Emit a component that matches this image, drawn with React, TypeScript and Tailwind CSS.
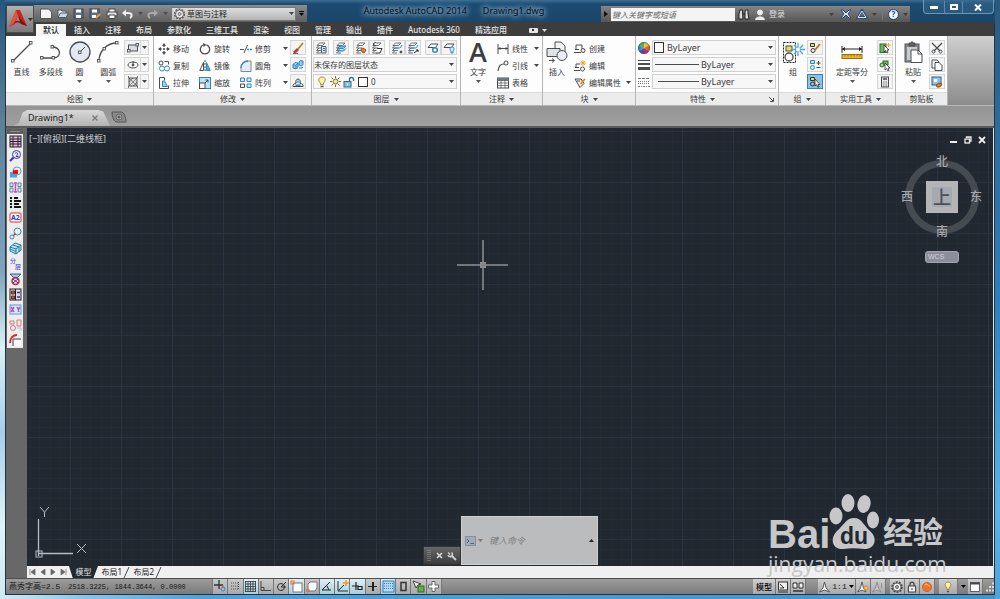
import type React from "react"

type Children = { children?: React.ReactNode }

interface GlyphProps extends Children {
  w?: number
  h?: number
  color?: string
}

const BLUE = "#2f86c1"

const Glyph = ({ w = 12, h = 12, color = "#4a4d50", children }: GlyphProps) => (
  <svg width={w} height={h} viewBox={`0 0 ${w} ${h}`} fill="none" stroke={color} className="block shrink-0" aria-hidden="true">
    {children}
  </svg>
)

const Caret = ({ className = "text-[#444]" }: { className?: string }) => (
  <svg width="5" height="3" viewBox="0 0 5 3" fill="currentColor" className={`block shrink-0 ${className}`} aria-hidden="true">
    <path d="M0 0h5L2.5 3z" />
  </svg>
)

/* ---------- ribbon building blocks ---------- */

const Panel = ({ title, width, caret = true, launcher = false, children }: Children & { title: string; width: string; caret?: boolean; launcher?: boolean }) => (
  <section className={`flex shrink-0 flex-col border-r border-[#b4b4b4] bg-[#fdfdfd] ${width}`}>
    <div className="flex h-[56px] pt-1">{children}</div>
    <div className="flex h-[13px] items-center border-t border-[#dcdcdc] bg-[#ececec]">
      <button className="flex flex-1 items-center justify-center gap-1 leading-3">
        {title}
        {caret && <Caret />}
      </button>
      {launcher && (
        <button aria-label="特性设置" className="pr-1">
          <Glyph w={5} h={5}>
            <path d="M0 0l4 4M4.500 1v3.500H1" />
          </Glyph>
        </button>
      )}
    </div>
  </section>
)

const BigButton = ({ label, width, caret = false, icon }: { label: string; width: string; caret?: boolean; icon: React.ReactNode }) => (
  <button className={`flex shrink-0 flex-col items-center ${width}`}>
    <span className="flex h-6 items-center">{icon}</span>
    <span className="h-4 leading-4 whitespace-nowrap">{label}</span>
    {caret && <Caret className="text-[#555]" />}
  </button>
)

const Command = ({ label, width = "w-[41px]", icon }: { label: string; width?: string; icon: React.ReactNode }) => (
  <button className={`flex h-[17px] shrink-0 items-center gap-[3px] whitespace-nowrap ${width}`}>
    {icon}
    {label}
  </button>
)

const CaretButton = ({ label }: { label: string }) => (
  <button aria-label={label} className="flex h-[17px] w-2 shrink-0 items-center justify-center">
    <Caret />
  </button>
)

const ToolButton = ({ label, active = false, children }: Children & { label: string; active?: boolean }) => (
  <button
    aria-label={label}
    className={`flex h-[15px] w-4 shrink-0 items-center justify-center border ${active ? "border-[#3c7fb8] bg-[#8cc0ee]" : "border-[#d5d5d5] bg-[#f4f4f4]"}`}
  >
    {children}
  </button>
)

const SplitTool = ({ label, children }: Children & { label: string }) => (
  <div className="flex h-[15px] w-[25px] border border-[#d5d5d5] bg-[#f4f4f4]">
    <button aria-label={label} className="flex w-4 items-center justify-center border-r border-[#d5d5d5]">
      {children}
    </button>
    <button aria-label={`${label}选项`} className="flex flex-1 items-center justify-center">
      <Caret />
    </button>
  </div>
)

const Combo = ({ label, value, children }: Children & { label: string; value: string }) => (
  <label className="flex h-[15px] flex-1 items-center gap-[2px] border border-[#d0d0d0] bg-[#f7f7f7] pr-[2px]">
    {children}
    <select aria-label={label} className="min-w-0 flex-1 appearance-none bg-transparent leading-3 outline-none">
      <option>{value}</option>
    </select>
    <Caret />
  </label>
)

/* ---------- icons ---------- */

const Node = ({ x, y }: { x: number; y: number }) => <rect x={x} y={y} width="2.500" height="2.500" fill="#fff" strokeWidth=".9" />

// stack of sheets seen at an angle, shared by all layer tools
const LayerIcon = ({ children }: Children) => (
  <Glyph>
    <g strokeWidth=".8">
      <path d="M2 3.500L4.500 1H10L7.500 3.500z" fill="#fff" />
      <path d="M4 3.500L1.500 6H7M4 6L1.500 8.500H6M4 8.500L1.500 11H6" />
    </g>
    {children}
  </Glyph>
)

const layerTools = {
  properties: <path d="M6.500 4.500h4.500v6.500H6.500zM8 6.500h2M8 8.500h2" fill="#cfe4f5" stroke="#41607a" />,
  current: <path d="M2.500 6.500L5 4h6L8.500 6.500zM2.500 9L5 6.500M3 9h5.500L11 6.500" fill="#7dbbe6" stroke={BLUE} />,
  match: <path d="M6 7l2-1 3 2-2 3-2-1z" fill="#e08a34" stroke="#9b4d16" />,
  previous: <path d="M5 0L2 2l3 2M6 6.500h5L9 11H5" fill="#fff" stroke="#333" />,
  isolate: (
    <>
      <path d="M4 6h5l2-3M4 8.500h3" stroke={BLUE} />
      <circle cx="10" cy="10" r="1" fill="#333" />
    </>
  ),
  unisolate: (
    <>
      <path d="M4 6h5l2-3M4 8.500h3" stroke={BLUE} />
      <path d="M7 11l4-3M9 8h2v2" stroke="#222" />
    </>
  ),
}

const DrawPanel = () => (
  <Panel title="绘图" width="w-[148px]">
    <div className="flex flex-1 justify-between pr-1 pl-[2px]">
      <BigButton
        label="直线"
        width="w-[27px]"
        icon={
          <Glyph w={22} h={22}>
            <path d="M2 20L20 2" strokeWidth="1.300" />
            <Node x={0.5} y={18.5} />
            <Node x={18.5} y={0.5} />
          </Glyph>
        }
      />
      <BigButton
        label="多段线"
        width="w-[28px]"
        icon={
          <Glyph w={22} h={18}>
            <path d="M2 15h12c8-1 7-11-2-11" strokeWidth="1.300" />
            <Node x={0.5} y={13.5} />
            <Node x={12} y={13.5} />
            <Node x={11} y={2.5} />
          </Glyph>
        }
      />
      <BigButton
        label="圆"
        caret
        width="w-[26px]"
        icon={
          <Glyph w={22} h={22}>
            <circle cx="11" cy="11" r="10" fill="#e4e9f1" strokeWidth="1.300" />
            <path d="M11 11l5-5" />
            <Node x={9.5} y={10} />
          </Glyph>
        }
      />
      <BigButton
        label="圆弧"
        caret
        width="w-[28px]"
        icon={
          <Glyph w={22} h={22}>
            <path d="M2 20C2 10 10 2 20 2" strokeWidth="1.300" />
            <Node x={0.5} y={18.5} />
            <Node x={6} y={6.5} />
            <Node x={18.5} y={0.5} />
          </Glyph>
        }
      />
      <div className="flex flex-col gap-[2px]">
        <SplitTool label="矩形">
          <Glyph w={12} h={10}>
            <rect x="1.500" y="2" width="9" height="6" fill="#d9dde2" />
            <Node x={0.5} y={6.5} />
            <Node x={9} y={0.5} />
          </Glyph>
        </SplitTool>
        <SplitTool label="椭圆">
          <Glyph w={12} h={10}>
            <ellipse cx="6" cy="5" rx="5" ry="3" fill="#fff" />
            <circle cx="6" cy="5" r="1" fill="#444" />
            <path d="M6 1v3" />
          </Glyph>
        </SplitTool>
        <SplitTool label="图案填充">
          <Glyph w={12} h={12}>
            <rect x="2" y="2" width="8" height="8" fill="#ddd" />
            <path d="M2 6l4-4M2 10l8-8M6 10l4-4M2 2l8 8" strokeWidth=".6" />
            <path d="M1 1h1M10 1h1M1 11h1M10 11h1" strokeWidth="1.500" />
          </Glyph>
        </SplitTool>
      </div>
    </div>
  </Panel>
)

const ModifyPanel = () => (
  <Panel title="修改" width="w-[158px]">
    <div className="flex flex-1 pl-1">
      <div className="flex flex-col">
        <Command
          label="移动"
          icon={
            <Glyph>
              <path d="M6 1v10M1 6h10" strokeDasharray="3 1 2 1" strokeWidth="1.200" />
              <path d="M4 3l2-3 2 3zM4 9l2 3 2-3zM3 4L0 6l3 2zM9 4l3 2-3 2z" fill="#4a4d50" stroke="none" />
            </Glyph>
          }
        />
        <Command
          label="复制"
          icon={
            <Glyph>
              <circle cx="3" cy="3" r="2" />
              <path d="M6.500 1.500h4v3" />
              <circle cx="4" cy="8.500" r="2.500" fill="#fff" stroke={BLUE} />
              <circle cx="9" cy="8.500" r="2.500" fill="#fff" stroke={BLUE} />
            </Glyph>
          }
        />
        <Command
          label="拉伸"
          icon={
            <Glyph>
              <path d="M1.500 .5v11h9v-3M1.500 .5h5v3" />
              <path d="M4.500 9.500V4h2l3 5.500z" fill="#9fd0f2" stroke={BLUE} />
            </Glyph>
          }
        />
      </div>
      <div className="flex flex-col">
        <Command
          label="旋转"
          icon={
            <Glyph>
              <path d="M7.500 1.800A4.700 4.700 0 1 1 4 2" strokeWidth="1.300" />
              <path d="M4 0l3.500 1.800L4.500 4z" fill="#4a4d50" stroke="none" />
            </Glyph>
          }
        />
        <Command
          label="镜像"
          icon={
            <Glyph>
              <path d="M4.500 2.500v8H.8z" />
              <path d="M7.500 2.500v8h3.700z" fill="#5aaae0" stroke={BLUE} />
              <path d="M6 0v12" strokeDasharray="2 1" />
            </Glyph>
          }
        />
        <Command
          label="缩放"
          icon={
            <Glyph>
              <rect x=".5" y=".5" width="11" height="11" fill="#bfe0f5" stroke={BLUE} />
              <rect x=".5" y="6" width="5.500" height="5.500" fill="#fff" />
              <path d="M6 6l3-3M6.500 3H9v2.500" />
            </Glyph>
          }
        />
      </div>
      <div className="flex flex-col">
        <Command
          label="修剪"
          icon={
            <Glyph>
              <path d="M0 6.500h4M4 10l3.500-8" />
              <path d="M7 6.500h2M10 6.500h2" stroke={BLUE} strokeWidth="1.300" />
            </Glyph>
          }
        />
        <Command
          label="圆角"
          icon={
            <Glyph>
              <path d="M1 11.500V8c0-4 3-7 7-7h3v10.500z" fill="#e4eef5" stroke="#7c8790" />
              <path d="M1 8c0-4 3-7 7-7" stroke={BLUE} strokeWidth="1.300" />
            </Glyph>
          }
        />
        <Command
          label="阵列"
          icon={
            <Glyph>
              <path d="M.5 1h4v3.500h-4zM7 1h4v3.500H7zM7 7h4v3.500H7z" fill="#d7ebf8" stroke={BLUE} />
              <path d="M.5 7h4v3.500h-4z" />
            </Glyph>
          }
        />
      </div>
      <div className="flex flex-col">
        <CaretButton label="修剪选项" />
        <CaretButton label="圆角选项" />
        <CaretButton label="阵列选项" />
      </div>
      <div className="ml-px flex flex-col gap-[2px]">
        <ToolButton label="删除">
          <Glyph>
            <path d="M11 1L6 7" stroke="#c07a28" strokeWidth="1.800" />
            <path d="M5 6l2 2-3 3H2l-1-1z" fill="#b8402a" stroke="none" />
            <path d="M1 11.500h5" strokeWidth=".8" />
          </Glyph>
        </ToolButton>
        <ToolButton label="分解">
          <Glyph>
            <path d="M1 5.500l2-2 3 .5v4.500L4 10 1 9zM1 5.500l3 .8L6 4M4 6.300V10M7 3l1.500-1.500L11 2v3.500L9.500 7 7 6zM7 9h3l1-1" fill="#8cc6ee" stroke={BLUE} />
          </Glyph>
        </ToolButton>
        <ToolButton label="偏移">
          <Glyph>
            <path d="M1 10.500h10c.5-2-1-3-3-3 1.500-6-5.500-6-4 0-2 0-3.500 1-3 3z" stroke="#444" />
            <path d="M3.500 9.200h5" stroke={BLUE} strokeWidth="1.500" />
            <path d="M5.200 7c-.8-3 2.400-3 1.600 0" stroke={BLUE} />
          </Glyph>
        </ToolButton>
      </div>
    </div>
  </Panel>
)

const LayerPanel = () => (
  <Panel title="图层" width="w-[149px]">
    <div className="flex flex-1 flex-col gap-[2px] pr-[3px] pl-px">
      <div className="flex justify-between">
        <ToolButton label="图层特性">
          <LayerIcon>{layerTools.properties}</LayerIcon>
        </ToolButton>
        <ToolButton label="置为当前">
          <LayerIcon>{layerTools.current}</LayerIcon>
        </ToolButton>
        <div className="flex">
          <ToolButton label="匹配">
            <LayerIcon>{layerTools.match}</LayerIcon>
          </ToolButton>
          <ToolButton label="上一个">
            <LayerIcon>{layerTools.previous}</LayerIcon>
          </ToolButton>
        </div>
        <div className="flex">
          <ToolButton label="隔离">
            <LayerIcon>{layerTools.isolate}</LayerIcon>
          </ToolButton>
          <ToolButton label="取消隔离">
            <LayerIcon>{layerTools.unisolate}</LayerIcon>
          </ToolButton>
        </div>
        <div className="flex">
          <ToolButton label="冻结">
            <Glyph>
              <path d="M1 5.500L4 2h7L8.500 5.500z" fill="#fff" />
              <circle cx="8" cy="8" r="2.300" fill="#fff" stroke={BLUE} strokeWidth="1.500" />
            </Glyph>
          </ToolButton>
          <ToolButton label="关闭">
            <Glyph>
              <path d="M1 5.500L4 2h7L8.500 5.500z" fill="#fff" />
              <path d="M9 5c-3 0-2 3-1 4v2h2V9c1-1 2-4-1-4z" fill="#d5e8f7" stroke={BLUE} />
            </Glyph>
          </ToolButton>
        </div>
      </div>
      <div className="flex">
        <Combo label="图层状态" value="未保存的图层状态" />
      </div>
      <div className="flex">
        <Combo label="图层" value="0">
          <Glyph w={14} h={12}>
            <path d="M8 1C4 1 4 5 6.500 7v1.500h3V7C12 5 12 1 8 1z" fill="#fff1a8" stroke="#a08a45" />
            <path d="M6.500 10.500h3" stroke="#555" strokeWidth="1.500" />
          </Glyph>
          <Glyph w={11} h={11}>
            <circle cx="5.500" cy="5.500" r="2.500" fill="#f8e58e" stroke="#7c6c38" />
            <path d="M5.500 0v2M5.500 9v2M0 5.500h2M9 5.500h2M1.500 1.500l1.500 1.500M8 8l1.500 1.500M9.500 1.500L8 3M3 8L1.500 9.500" stroke="#7c6c38" />
          </Glyph>
          <Glyph w={12} h={12}>
            <rect x="1" y="5.500" width="7" height="5.500" fill="#88bfe0" stroke="#2f6b8f" />
            <path d="M6.500 5V3c0-2 4-2 4 0v2" stroke="#2f6b8f" strokeWidth="1.300" />
            <path d="M4.500 7.500v2" stroke="#fff" />
          </Glyph>
          <Glyph w={12} h={12}>
            <rect x="1.500" y="1.500" width="9" height="9" fill="#fff" stroke="#333" />
          </Glyph>
        </Combo>
      </div>
    </div>
  </Panel>
)

const AnnotatePanel = () => (
  <Panel title="注释" width="w-[82px]">
    <div className="flex flex-1 pl-1">
      <BigButton
        label="文字"
        caret
        width="w-[26px]"
        icon={<span className="font-['Open_Sans',sans-serif] text-[27px] leading-6 font-semibold text-[#3b3d40]">A</span>}
      />
      <div className="ml-[6px] flex flex-col">
        <Command
          label="线性"
          width="w-[35px]"
          icon={
            <Glyph>
              <path d="M1 1v10M11 1v10M1 5.500h10" />
              <path d="M1 5.500l2.500-1.500v3zM11 5.500L8.500 4v3z" fill="#444" stroke="none" />
            </Glyph>
          }
        />
        <Command
          label="引线"
          width="w-[35px]"
          icon={
            <Glyph>
              <path d="M1 11c1-5 2-7 6-7" strokeWidth="1.200" />
              <circle cx="9" cy="3" r="2" />
            </Glyph>
          }
        />
        <Command
          label="表格"
          width="w-[35px]"
          icon={
            <Glyph>
              <rect x=".5" y="1" width="11" height="10" fill="#fff" />
              <path d="M.5 2.500h11" strokeWidth="3" stroke="#6d7a86" />
              <path d="M.5 6h11M.5 8.500h11M4 3v8M8 3v8" strokeWidth=".7" />
            </Glyph>
          }
        />
      </div>
      <div className="flex flex-col">
        <CaretButton label="线性选项" />
        <CaretButton label="引线选项" />
      </div>
    </div>
  </Panel>
)

const BlockPanel = () => (
  <Panel title="块" width="w-[93px]">
    <div className="flex flex-1 pl-px">
      <BigButton
        label="插入"
        width="w-[26px]"
        icon={
          <Glyph w={22} h={22}>
            <path d="M9 1h6l4 4v6H9z" fill="#f3f3f3" />
            <path d="M1 7.500h13v8H1z" fill="#dfe3e8" />
            <circle cx="16" cy="14.500" r="5" fill="#e9ecf0" />
            <path d="M3 19.500h5M6 17.500l2.500 2L6 21.500" />
          </Glyph>
        }
      />
      <div className="ml-1 flex flex-col">
        <Command
          label="创建"
          width="w-[50px]"
          icon={
            <Glyph>
              <path d="M2 6V2h6v4" />
              <circle cx="9" cy="7.500" r="2" fill="#eee" />
              <path d="M0 9.500h7M1 6.500h4" />
            </Glyph>
          }
        />
        <Command
          label="编辑"
          width="w-[50px]"
          icon={
            <Glyph>
              <path d="M6 4H2v4M1 7.500h4M0 10.500h6" />
              <circle cx="8.500" cy="9" r="2" fill="#fff" />
              <path d="M9 0v6M6 3h6M7 1l4 4M11 1L7 5" stroke="#f0a020" strokeWidth=".9" />
            </Glyph>
          }
        />
        <Command
          label="编辑属性"
          width="w-[50px]"
          icon={
            <Glyph>
              <path d="M1 2l5 8.500 4-4L7 2z" fill="#f2efe6" />
              <path d="M11 2L6.500 7" stroke="#d9822b" strokeWidth="1.800" />
              <path d="M3 4h3" />
            </Glyph>
          }
        />
      </div>
      <div className="flex flex-col justify-end pb-px">
        <CaretButton label="编辑属性选项" />
      </div>
    </div>
  </Panel>
)

const PropertiesPanel = () => (
  <Panel title="特性" width="w-[143px]" launcher>
    <div className="flex flex-1 flex-col gap-[2px] px-[2px] text-[9px]">
      <div className="flex items-center gap-[2px]">
        <Glyph>
          <g stroke="none">
            <path d="M6 6V0a6 6 0 0 1 5.200 3z" fill="#f0c33c" />
            <path d="M6 6l5.200-3a6 6 0 0 1 0 6z" fill="#e0662c" />
            <path d="M6 6l5.200 3A6 6 0 0 1 6 12z" fill="#c12f5a" />
            <path d="M6 6v6A6 6 0 0 1 .8 9z" fill="#5a46b0" />
            <path d="M6 6L.8 9a6 6 0 0 1 0-6z" fill="#3a8ad0" />
            <path d="M6 6L.8 3A6 6 0 0 1 6 0z" fill="#58b04a" />
          </g>
          <circle cx="6" cy="6" r="5.500" strokeWidth=".7" />
        </Glyph>
        <Combo label="对象颜色" value="ByLayer">
          <Glyph w={12} h={13}>
            <rect x="1.500" y="1.500" width="9" height="10" fill="#fff" stroke="#333" />
          </Glyph>
        </Combo>
      </div>
      <div className="flex items-center gap-[2px]">
        <Glyph>
          <path d="M0 1.500h12" />
          <path d="M0 5h12" strokeWidth="2" />
          <path d="M0 9.500h12" strokeWidth="3" />
        </Glyph>
        <Combo label="线宽" value="ByLayer">
          <Glyph w={46} h={3}>
            <path d="M2 1.500h44" />
          </Glyph>
        </Combo>
      </div>
      <div className="flex items-center gap-[2px]">
        <Glyph color="#777">
          <path d="M0 2.500h12" strokeDasharray="3 1" />
          <path d="M0 5.500h12M0 7.500h12" strokeDasharray="1 1" />
          <path d="M0 10.500h12" strokeDasharray="2 1 1 1" />
        </Glyph>
        <Combo label="线型" value="ByLayer">
          <Glyph w={46} h={3}>
            <path d="M5 1.500h41" />
          </Glyph>
        </Combo>
      </div>
    </div>
  </Panel>
)

const GroupPanel = () => (
  <Panel title="组" width="w-[47px]">
    <div className="flex flex-1 justify-between px-[2px]">
      <BigButton
        label="组"
        width="w-6"
        icon={
          <Glyph w={23} h={24}>
            <rect x="1.500" y="2.500" width="12" height="20" stroke="#222" strokeDasharray="2 1" />
            <rect x="4" y="6" width="6" height="5" fill="#e7e04a" />
            <circle cx="7" cy="17" r="4" fill="#fff" strokeWidth="1.300" />
            <path d="M16 3v13M10 9.500h13M12 5l9 9M21 5l-9 9" stroke="#4aa6df" strokeWidth="1.300" />
            <circle cx="16" cy="9.500" r="2" fill="#fff" stroke="none" />
          </Glyph>
        }
      />
      <div className="flex flex-col gap-[2px]">
        <ToolButton label="解除编组">
          <Glyph>
            <path d="M1.500 1.500h4v3h-4z" fill="#e7e04a" stroke="#333" />
            <circle cx="4" cy="8.500" r="2" stroke="#333" />
            <path d="M11 2L6 8" stroke="#b9701f" strokeWidth="1.800" />
          </Glyph>
        </ToolButton>
        <ToolButton label="组编辑">
          <Glyph>
            <path d="M1.500 1.500h4v3h-4z" fill="#bddcf1" stroke={BLUE} />
            <circle cx="3.500" cy="8.500" r="2" stroke={BLUE} />
            <path d="M7.500 4h4M9.500 2v4M7.500 8.500h4" />
          </Glyph>
        </ToolButton>
        <ToolButton label="组选择" active>
          <Glyph>
            <path d="M1.500 1.500h4v3h-4z" fill="#e7e04a" stroke="#333" />
            <circle cx="3.500" cy="8" r="2" stroke="#333" />
            <path d="M6 3v7l1.500-1.500L9 11.500l1-.5-1-2.500h2z" fill="#fff2b8" stroke="#333" strokeWidth=".8" />
          </Glyph>
        </ToolButton>
      </div>
    </div>
  </Panel>
)

const UtilitiesPanel = () => (
  <Panel title="实用工具" width="w-[70px]">
    <div className="flex flex-1 justify-between pr-[2px] pl-2">
      <BigButton
        label="定距等分"
        caret
        width="w-9"
        icon={
          <Glyph w={22} h={16}>
            <path d="M1 2v7M21 2v7M1 5h20" stroke="#222" />
            <path d="M1 5l3-2v4zM21 5l-3-2v4z" fill="#222" stroke="none" />
            <rect x="1" y="10.500" width="20" height="4" fill="#efb62c" stroke="#9a6d10" />
            <path d="M4 11v1.500M7 11v1.500M10 11v1.500M13 11v1.500M16 11v1.500M19 11v1.500" stroke="#7d560a" strokeWidth=".7" />
          </Glyph>
        }
      />
      <div className="flex flex-col gap-[2px]">
        <ToolButton label="快速选择">
          <Glyph>
            <rect x="1" y="2" width="6" height="8.500" fill="#6db85a" stroke="#2c6e22" />
            <path d="M5 3v7l1.500-1.500L8 11l1-.5L8 8h2z" fill="#fff" stroke="#333" strokeWidth=".8" />
            <path d="M9.500 1v4M7.500 3h4" stroke="#f0a020" />
          </Glyph>
        </ToolButton>
        <ToolButton label="全部选择">
          <Glyph>
            <rect x="4" y="2" width="5" height="4" fill="#6db85a" stroke="#2c6e22" />
            <circle cx="3" cy="6" r="2" fill="#a9d69e" stroke="#2c6e22" />
            <path d="M6 4v7l1.500-1.500L9 12l1-.5L9 9h2z" fill="#fff" stroke="#333" strokeWidth=".8" />
          </Glyph>
        </ToolButton>
        <ToolButton label="快速计算器">
          <Glyph>
            <rect x="2.500" y="1" width="7" height="10" fill="#e8e8e8" />
            <path d="M4 3h4" strokeWidth="1.500" />
            <path d="M4 6h4M4 8h4M4 10h4" strokeDasharray="1 .5" strokeWidth=".7" />
          </Glyph>
        </ToolButton>
      </div>
    </div>
  </Panel>
)

const ClipboardPanel = () => (
  <Panel title="剪贴板" width="w-[52px]" caret={false}>
    <div className="flex flex-1 justify-between pr-[2px] pl-[5px]">
      <BigButton
        label="粘贴"
        caret
        width="w-6"
        icon={
          <Glyph w={19} h={23}>
            <rect x="1" y="3" width="14" height="18" fill="#85878a" stroke="#55585b" />
            <path d="M3 6h10v13H3z" fill="#c9cbce" stroke="none" />
            <path d="M5 5V2h2l1-1.500L9 2h2v3z" fill="#666" />
            <path d="M7 9h7l4 4v8.500H7z" fill="#fff" />
            <path d="M14 9v4h4" />
          </Glyph>
        }
      />
      <div className="flex flex-col gap-[2px]">
        <ToolButton label="剪切">
          <Glyph>
            <path d="M1 1l8 8M11 1L3 9" strokeWidth="1.300" />
            <circle cx="2.500" cy="9.500" r="1.500" />
            <circle cx="9.500" cy="9.500" r="1.500" />
          </Glyph>
        </ToolButton>
        <ToolButton label="复制剪裁">
          <Glyph>
            <path d="M1 1h5l2 2v6H1z" fill="#fff" />
            <path d="M4 3.500h4l3 3v5H4z" fill="#fff" />
          </Glyph>
        </ToolButton>
        <ToolButton label="特性匹配">
          <Glyph>
            <rect x="1" y="1" width="9" height="8" fill="#8fc3ea" stroke="#33628c" />
            <path d="M3 3h3v3H3z" fill="#fff" stroke="none" />
            <path d="M5 9l3-2 3 1-2 3H6z" fill="#d9822b" stroke="#8f4c12" />
          </Glyph>
        </ToolButton>
      </div>
    </div>
  </Panel>
)

/* ---------- title bar ---------- */

const TitleBar = () => (
  <div className="flex h-[22px]">
    <div className="mt-[5px] flex w-[273px] shrink-0 items-center bg-linear-to-b from-[#8d8d8d] to-[#5f5f5f] pl-[6px]">
      <div className="flex flex-1 items-center justify-between pr-[3px]">
        <button aria-label="新建">
          <Glyph w={12} h={11} color="#555">
            <path d="M.5 1h8l3 3v6.500H.5z" fill="#f5f5f5" />
          </Glyph>
        </button>
        <button aria-label="打开">
          <Glyph w={12} h={11} color="#4d5866">
            <path d="M1 9.500V2h3l1 1h4v2" fill="#eee" />
            <path d="M1 9.500L3.500 5h8L9 9.500z" fill="#c9dbea" />
          </Glyph>
        </button>
        <button aria-label="保存">
          <Glyph w={11} h={11} color="#3a4454">
            <rect x="1" y="1" width="9" height="9" fill="#5f6d82" />
            <path d="M3 1.500h5v3H3zM3 7h5v3H3z" fill="#fff" stroke="none" />
          </Glyph>
        </button>
        <button aria-label="另存为">
          <Glyph w={12} h={11} color="#3a4454">
            <rect x="1" y="1" width="9" height="9" fill="#5f6d82" />
            <path d="M3 1.500h5v3H3zM3 7h4v3H3z" fill="#fff" stroke="none" />
            <path d="M11 6l-4 4" stroke="#e8973a" strokeWidth="2" />
          </Glyph>
        </button>
        <button aria-label="打印">
          <Glyph w={12} h={11} color="#444">
            <path d="M3 4V1h6v3" fill="#fff" />
            <rect x="1" y="4" width="10" height="4" fill="#e6e6e6" />
            <path d="M3 7h6v3.500H3z" fill="#fff" />
          </Glyph>
        </button>
        <button aria-label="放弃">
          <Glyph w={11} h={10} color="#eee">
            <path d="M3 4h3c5 0 4 4 2 5" strokeWidth="2" />
            <path d="M0 4l4-3.500v7z" fill="#eee" stroke="none" />
          </Glyph>
        </button>
        <Caret className="text-[#4a4a4a]" />
        <button aria-label="重做">
          <Glyph w={11} h={10} color="#aaa">
            <path d="M8 4H5C0 4 1 8 3 9" strokeWidth="2" />
            <path d="M11 4L7 .5v7z" fill="#aaa" stroke="none" />
          </Glyph>
        </button>
        <Caret className="text-[#4a4a4a]" />
      </div>
      <label className="flex h-[14px] w-[125px] items-center gap-px border border-[#777] bg-linear-to-b from-[#dedede] to-[#b5b5b5] px-px text-[#222]">
        <Glyph w={13} h={12} color="#555">
          <circle cx="6.500" cy="6" r="4.800" strokeDasharray="1.800 1.200" strokeWidth="1.500" />
          <circle cx="6.500" cy="6" r="4" fill="#eee" strokeWidth=".8" />
          <circle cx="6.500" cy="6" r="1.500" fill="#ccc" strokeWidth=".8" />
        </Glyph>
        <select aria-label="工作空间" className="min-w-0 flex-1 appearance-none bg-transparent leading-3 outline-none">
          <option>草图与注释</option>
        </select>
        <Caret />
      </label>
      <button aria-label="自定义快速访问工具栏" className="flex w-[11px] flex-col items-center gap-px">
        <span className="h-px w-[5px] bg-black" />
        <Caret className="text-black" />
      </button>
    </div>

    <div className="flex min-w-0 flex-1 items-center justify-center gap-4 text-[9px] whitespace-nowrap text-[#050b12] [text-shadow:0_0_4px_#a9c6de,0_0_6px_#8fb4d4,0_0_9px_#8fb4d4]">
      <span>Autodesk AutoCAD 2014</span>
      <span>Drawing1.dwg</span>
    </div>

    <div className="mt-[6px] flex w-[309px] shrink-0 items-center bg-linear-to-b from-[#858585] to-[#565656] text-[#ddd]">
      <button aria-label="展开搜索" className="flex w-[10px] justify-center">
        <Glyph w={4} h={6}>
          <path d="M0 0l4 3-4 3z" fill="#111" stroke="none" />
        </Glyph>
      </button>
      <input aria-label="搜索" placeholder="键入关键字或短语" className="h-[13px] w-[124px] bg-[#f4f4f4] px-px italic outline-none placeholder:text-[#666]" />
      <button aria-label="查找" className="ml-[3px]">
        <Glyph w={12} h={11} color="#222">
          <path d="M2 1h2.500v2L5 10H1V5zM7.500 1H10v4l1 5H7V3z" fill="#ddd" />
          <path d="M5 5h2" />
        </Glyph>
      </button>
      <button className="ml-[5px] flex items-center gap-[4px]">
        <Glyph w={10} h={11} color="#eee">
          <circle cx="5" cy="3.500" r="2.500" fill="#eee" />
          <path d="M.5 10.500C1 7 9 7 9.500 10.500z" fill="#eee" />
        </Glyph>
        登录
      </button>
      <div className="flex flex-1 items-center justify-end gap-1 pr-[2px]">
        <Caret className="text-[#3f3f3f]" />
        <button aria-label="Exchange" className="ml-[2px]">
          <Glyph w={12} h={10} color="#24427f">
            <path d="M1 1h2l3 3 3-3h2L8 5l3 4H9L6 6 3 9H1l3-4z" fill="#dfe8f5" />
          </Glyph>
        </button>
        <button aria-label="Autodesk 360" className="flex items-center gap-1">
          <Glyph w={12} h={10} color="#dfe3ee">
            <path d="M6 1.500L2 8.500h8z" fill="none" stroke="#24427f" strokeWidth="2.500" />
            <path d="M6 2L2 8.500h8z" />
          </Glyph>
          <Caret className="text-[#3f3f3f]" />
        </button>
        <span className="mx-px h-3 w-px bg-[#777]" />
        <button aria-label="帮助" className="flex items-center gap-1">
          <span className="flex size-[11px] items-center justify-center rounded-full border border-[#1f3c78] bg-[#f3f6fb] leading-none font-bold text-[#1d4aa3]">?</span>
          <Caret className="text-[#3f3f3f]" />
        </button>
      </div>
    </div>

    <div className="ml-[13px] flex h-[14px] w-[71px] shrink-0 rounded-b border border-t-0 border-[#6c96b4] bg-[#3a6a8f]/50 pt-px">
      <button aria-label="最小化" className="flex w-5 items-center justify-center">
        <span className="h-[3px] w-2 bg-white" />
      </button>
      <button aria-label="最大化" className="flex w-[19px] items-center justify-center border-x border-[#5e89a8]">
        <span className="h-[6px] w-2 border-2 border-white" />
      </button>
      <button aria-label="关闭" className="flex flex-1 items-center justify-center">
        <Glyph w={8} h={7} color="#fff">
          <path d="M1 .5l6 6M7 .5l-6 6" strokeWidth="2" />
        </Glyph>
      </button>
    </div>
  </div>
)

const tabs = ["默认", "插入", "注释", "布局", "参数化", "三维工具", "渲染", "视图", "管理", "输出", "插件", "Autodesk 360", "精选应用"]

const Header = () => (
  <header className="flex">
    <div className="mt-[5px] w-7 shrink-0 bg-[#3d3d3d] pb-[3px]">
      <button aria-label="应用程序菜单" className="flex h-7 w-7 items-center gap-px border border-[#4b4b4b] bg-linear-to-b from-[#b0b0b0] to-[#7a7a7a] pl-[2px]">
        <Glyph w={18} h={20}>
          <g stroke="none">
            <path d="M7 1h4l7 16-6-2-3-8-3 8-6 3z" fill="#c3261b" />
            <path d="M7 1l2 6-4 7-5 4z" fill="#e2553f" />
            <path d="M9 7l9 10-6-2z" fill="#7d120d" />
            <path d="M5 14c3-3 5-3 8 1l-4-1.500z" fill="#8e1811" />
          </g>
        </Glyph>
        <Caret className="text-[#333]" />
      </button>
    </div>
    <div className="min-w-0 flex-1">
      <TitleBar />
      <nav className="flex h-[14px] gap-px bg-[#3d3d3d] pl-[2px] font-medium whitespace-nowrap text-[#e6e6e6]">
        {tabs.map((tab, i) => (
          <button key={tab} className={i === 0 ? "mt-[2px] bg-[#f6f6f6] px-[7px] leading-3 text-[#222]" : "px-[7px] pt-[2px] leading-3"}>
            {tab}
          </button>
        ))}
        <button aria-label="最小化功能区" className="ml-[14px] flex items-center gap-1 pt-[2px]">
          <span className="flex h-[5px] w-[9px] items-center justify-center rounded-[1px] bg-[#e6e6e6]">
            <span className="size-[2px] bg-[#333]" />
          </span>
          <Caret className="text-[#ddd]" />
        </button>
      </nav>
    </div>
  </header>
)

const DocumentTabs = () => (
  <div className="flex h-[21px] items-end border-t border-[#b5b5b5] bg-linear-to-b from-[#949494] to-[#a0a0a0] pl-2">
    <div className="flex h-4 w-[96px] items-center justify-between bg-linear-to-b from-[#d8d8d8] to-[#b4b4b4] pr-[12px] pl-[14px] text-[9px] text-[#222] [clip-path:polygon(0_100%,5%_80%,9%_15%,14%_0,88%_0,93%_10%,100%_100%)]">
      <button className="leading-4">Drawing1*</button>
      <button aria-label="关闭图形">
        <Glyph w={6} h={6} color="#777">
          <path d="M.5.5l5 5M5.500.5l-5 5" strokeWidth="1.200" />
        </Glyph>
      </button>
    </div>
    <button aria-label="新图形" className="mb-[3px] ml-px">
      <Glyph w={16} h={12} color="#555">
        <path d="M1 1h9c3 0 5 5 5 10H6C3 11 1 6 1 1z" fill="#8a8a8a" />
        <circle cx="8" cy="6" r="3" fill="#aaa" stroke="#666" />
        <path d="M8 4.500v3M6.500 6h3" stroke="#444" />
      </Glyph>
    </button>
  </div>
)

/* ---------- side tool strip ---------- */

const PINK = "#e23bd0"
const NAVY = "#3333c0"

const sideTools = [
  { label: "网格", art: <><rect x="1" y="1" width="11" height="11" fill="#e7b9e4" stroke="#222" /><path d="M1 4h11M1 6.500h11M1 9h11M4 1v11M9 1v11" stroke="#222" /></> },
  { label: "缩放视图", art: <><circle cx="7.500" cy="4.500" r="4" stroke={NAVY} /><path d="M4.500 7.500L1 11" stroke={NAVY} strokeWidth="2" /><path d="M6 3.500c2-2 4 0 1 3h2.500" stroke={NAVY} /></> },
  { label: "布尔", art: <><circle cx="8" cy="5" r="4" stroke="#7a99ac" /><path d="M1 6h7v5.500H1z" fill="#4ba1dc" stroke="none" /><path d="M4 4h5v4H4z" fill="#e81515" stroke="none" /></> },
  { label: "对称", art: <><path d="M1 2h3v3.500H1zM1 7h3v4H1zM9 2h3v3.500H9zM9 7h3v4H9z" stroke="#4a8a9c" /><path d="M5 2h3M6.500 2v9M5 11h3" stroke={PINK} strokeWidth="1.500" /></> },
  { label: "列表", art: <path d="M1 2h2M1 5h2M1 8h2M1 11h2M5 2h4M5 5h7M5 8h5M5 11h7" stroke="#111" strokeWidth="2" /> },
  { label: "图幅", art: <><rect x="1" y="2" width="11" height="9" rx="1" fill="#fff" stroke="#e22a2a" /><text x="2" y="9" fontSize="7" fontWeight="700" fill={NAVY} stroke="none">A2</text></> },
  { label: "连杆", art: <><circle cx="8.500" cy="4.500" r="3.500" fill="#e2f3f8" stroke="#3a8aa8" /><circle cx="3" cy="10" r="2" stroke="#3a8aa8" /><path d="M4.500 8.500l2-2" stroke="#e22a2a" strokeWidth="1.500" /></> },
  { label: "实体", art: <><path d="M1 5l5-4 6 2v5l-5 4-6-3z" fill="#c8e8f5" stroke="#1d7aa8" /><path d="M1 5l6 2 5-4M7 7v5M4 3l6 2v5M1 7l6 2.500" stroke="#1d7aa8" /></> },
  { label: "分层", art: <g fill={NAVY} stroke="none" fontSize="6"><text x="1" y="6">分</text><text x="6" y="12">层</text></g> },
  { label: "筛选", art: <><path d="M1 1h11l-4 4H5z" fill="#9cd0ea" stroke="#315f9c" /><circle cx="6.500" cy="8" r="3.500" stroke="#c22a2a" strokeWidth="1.500" /><path d="M4 6l5 4M9 6l-5 4" stroke={NAVY} /></> },
  { label: "图块库", art: <><rect x="1" y="1" width="11" height="11" fill="#dcdcdc" stroke="#222" /><path d="M2.500 3h3v3h-3zM2.500 8h3v3h-3z" fill="#b85a4a" stroke="#702a20" /><path d="M6.500 1v11" stroke="#222" /><path d="M8 4.500h3M8 9h3" stroke={NAVY} strokeWidth="1.500" /></> },
  { label: "坐标", art: <><rect x="1" y="2" width="11" height="9" fill="#c9f3fa" stroke="#43a3e0" /><path d="M2 4l3 5M5 4L2 9M8 4l1.500 2.500L11 4M9.500 6v3" stroke={PINK} strokeWidth="1.500" /></> },
  { label: "形状", art: <><path d="M1 2h4v3H1zM8 1h4v6H8z" stroke="#d87878" /><circle cx="4" cy="9" r="2.500" stroke="#d87878" /><path d="M8 9h4v3" stroke="#bbb" /></> },
  { label: "倒角", art: <><path d="M1 9c0-5 3-8 7-8" stroke="#d22" strokeWidth="1.800" /><path d="M4 12V5h8" stroke="#444" /><path d="M5 6h7v6H5z" fill="#fafafa" stroke="none" /></> },
]

const SideStrip = () => (
  <aside className="w-[21px] shrink-0 bg-[#686868] pl-px">
    <div className="mt-px w-4 bg-[#ededed]">
      <div className="flex h-[5px] items-center justify-center bg-[#5e5e5e]">
        <span className="h-px w-[10px] bg-[#8d8d8d]" />
      </div>
      <div className="flex h-[214px] flex-col justify-between py-px">
        {sideTools.map((tool) => (
          <button key={tool.label} aria-label={tool.label} className="flex justify-center">
            <Glyph w={13} h={13}>
              {tool.art}
            </Glyph>
          </button>
        ))}
      </div>
    </div>
  </aside>
)

/* ---------- drawing area ---------- */

const Grid = () => (
  <svg className="absolute inset-0 h-full w-full" aria-hidden="true">
    <defs>
      <pattern id="grid" x="43" y="3" width="51" height="51" patternUnits="userSpaceOnUse">
        <path d="M10.500 0v51M20.500 0v51M31.500 0v51M41.500 0v51M0 10.500h51M0 20.500h51M0 31.500h51M0 41.500h51" stroke="#242b35" fill="none" />
        <path d="M.5 0v51M0 .5h51" stroke="#2b3341" fill="none" />
      </pattern>
    </defs>
    <rect width="100%" height="100%" fill="#212830" />
    <rect width="100%" height="100%" fill="url(#grid)" />
  </svg>
)

const ViewCube = () => (
  <div className="absolute top-[27px] right-[9px] flex w-[84px] flex-col items-center">
    <div className="relative flex size-[84px] items-center justify-center text-[12px] leading-none font-medium text-[#a4a8ac]">
      <span className="absolute inset-[5px] rounded-full border-[7px] border-[#464b52]" />
      <button className="absolute top-px">北</button>
      <button className="absolute bottom-px">南</button>
      <button className="absolute left-px">西</button>
      <button className="absolute right-[2px]">东</button>
      <button className="relative flex size-8 items-center justify-center border-[6px] border-[#b4b5b7] bg-[#a5a9b1] text-[18px] leading-none text-[#4c5058]">上</button>
    </div>
    <button className="mt-3 flex h-3 w-[34px] items-center rounded-[3px] border border-[#a4a5b0] bg-[#8d8e9b] pl-[2px] font-['Liberation_Sans',sans-serif] text-[7px] text-[#d0d0da]">WCS</button>
  </div>
)

const Canvas = () => (
  <main className="relative min-h-[438px] flex-1 overflow-hidden text-[#c9ccd0]">
    <Grid />
    <div className="absolute top-[5px] left-[2px] flex text-[9px] leading-3">
      <button>[−]</button>
      <button>[俯视]</button>
      <button>[二维线框]</button>
    </div>
    <div className="absolute top-2 right-[7px] flex gap-[6px]">
      <button aria-label="最小化视口">
        <Glyph w={8} h={8} color="#eee">
          <path d="M0 6h7" strokeWidth="2" />
        </Glyph>
      </button>
      <button aria-label="还原视口">
        <Glyph w={8} h={8} color="#eee">
          <path d="M2.500 2V1H7v4H6" strokeWidth="1.300" />
          <rect x="1" y="3" width="4.500" height="4" strokeWidth="1.300" />
        </Glyph>
      </button>
      <button aria-label="关闭视口">
        <Glyph w={8} h={8} color="#eee">
          <path d="M1 1l6 6M7 1L1 7" strokeWidth="1.800" />
        </Glyph>
      </button>
    </div>

    {/* crosshair */}
    <div className="absolute top-[111px] left-[430px]">
      <Glyph w={52} h={52} color="#8d9194">
        <path d="M26 1v50M0 26h51" strokeWidth="1.500" />
        <rect x="23.500" y="23.500" width="5" height="5" fill="#808488" />
      </Glyph>
    </div>

    <ViewCube />

    {/* ucs icon */}
    <div className="absolute bottom-[7px] left-2">
      <Glyph w={54} h={54} color="#b9bcbf">
        <path d="M3.500 51V14M3.500 48.500H38" strokeWidth="1.300" />
        <rect x="1" y="46" width="6" height="6" />
        <path d="M5 2l4.500 5L14 2M9.500 7v5M42 39l9 9M51 39l-9 9" />
      </Glyph>
    </div>

    {/* command line */}
    <div className="absolute bottom-px left-[396px] flex items-end">
      <div className="flex h-[19px] w-[38px] items-center justify-between border border-[#333] bg-linear-to-b from-[#686868] to-[#3c3c3c] px-[3px]">
        <Glyph w={4} h={12} color="#999">
          <path d="M1 0v12M3 0v12" strokeDasharray="1 1" />
        </Glyph>
        <button aria-label="关闭命令行">
          <Glyph w={7} h={7} color="#ddd">
            <path d="M1 1l5 5M6 1L1 6" strokeWidth="1.500" />
          </Glyph>
        </button>
        <button aria-label="自定义命令行">
          <Glyph w={10} h={10} color="#ccc">
            <path d="M4 4l5 5" strokeWidth="2" />
            <path d="M4.500 1.500A2.300 2.300 0 1 1 1 4M1 1.500l2 2" strokeWidth="1.500" />
          </Glyph>
        </button>
      </div>
      <label className="flex h-[49px] w-[137px] items-center gap-[2px] border border-[#cfcfcf] bg-[#bbbcbe] px-[3px]">
        <Glyph w={11} h={10} color="#555b66">
          <rect x=".5" y=".5" width="10" height="9" fill="#a4abb8" stroke="#8890a0" />
          <path d="M2 3l2 2-2 2M5.500 7.500H9" />
        </Glyph>
        <Caret className="text-[#777]" />
        <input aria-label="命令" placeholder="键入命令" className="min-w-0 flex-1 bg-transparent pl-1 text-[9px] italic outline-none placeholder:text-[#7d7d7d]" />
        <svg width="5" height="3" viewBox="0 0 5 3" aria-hidden="true">
          <path d="M0 3h5L2.500 0z" fill="#222" />
        </svg>
      </label>
    </div>
  </main>
)

const LayoutTabs = () => (
  <div className="flex h-3 shrink-0 items-center bg-[#f0f0f0] text-[#222]">
    <div className="flex w-[42px] justify-around text-[#777]">
      {["M2 0v6M7 0L3 3l4 3z", "M6 0L2 3l4 3z", "M2 0l4 3-4 3z", "M6 0v6M1 0l4 3-4 3z"].map((d) => (
        <button key={d} aria-label="切换布局">
          <Glyph w={8} h={6} color="#666">
            <path d={d} fill="#666" strokeWidth=".7" />
          </Glyph>
        </button>
      ))}
    </div>
    <button className="h-full w-[29px] bg-[#212830] leading-3 text-[#e0e0e0] [clip-path:polygon(0_0,100%_0,84%_100%,13%_100%)]">模型</button>
    {["布局1", "布局2"].map((name) => (
      <button key={name} className="flex h-full w-8 items-center justify-end gap-px leading-3">
        {name}
        <Glyph w={7} h={11}>
          <path d="M1 11L6 0" />
        </Glyph>
      </button>
    ))}
  </div>
)

const Watermark = () => (
  <div className="pointer-events-none absolute right-[49px] bottom-0 flex w-[176px] flex-col text-[#c5c7c9]">
    <div className="flex items-end">
      <span className="w-[61px] font-['Liberation_Sans',sans-serif] text-[40px] leading-8 font-bold">Bai</span>
      <span className="relative flex h-[58px] w-[50px] items-end justify-center">
        <svg viewBox="0 0 50 58" className="absolute inset-0 h-full w-full" fill="currentColor" aria-hidden="true">
          <ellipse cx="7" cy="24" rx="6.500" ry="8.500" />
          <ellipse cx="19" cy="11" rx="6.500" ry="9" />
          <ellipse cx="35" cy="12" rx="6.500" ry="9" transform="rotate(12 35 12)" />
          <ellipse cx="44" cy="28" rx="6" ry="8.500" />
          <path d="M25 26c8 0 10 8 16 13 9 8 4 19-6 18-7-1-14-1-21 0C4 58 0 47 8 39c6-5 9-13 17-13z" />
        </svg>
        <span className="relative font-['Liberation_Sans',sans-serif] text-[23px] leading-7 font-bold text-[#212830]">du</span>
      </span>
      <span className="ml-1 text-[30px] leading-9 font-bold">经验</span>
    </div>
    <span className="font-['Open_Sans',sans-serif] text-[21px] leading-7">jingyan.baidu.com</span>
  </div>
)

/* ---------- status bar ---------- */

const statusToggles = [
  { label: "推断约束", on: false, art: <><path d="M5 0v9M0 5h9" stroke="#333" strokeWidth="1.300" /><circle cx="9" cy="9" r="2" stroke={BLUE} /><path d="M9 5v3" stroke="#d8582a" /></> },
  { label: "捕捉", on: false, art: <path d="M2 3h8M2 6h8M2 9h8M9.500 2v8" stroke="#555" strokeDasharray="1 1" /> },
  { label: "栅格", on: true, art: <path d="M1 1.500h11M1 4h11M1 6.500h11M1 9h11M1 11.500h11M1.500 1v11M4 1v11M6.500 1v11M9 1v11M11.500 1v11" stroke="#333" strokeWidth=".8" /> },
  { label: "正交", on: false, art: <path d="M2 1v9.500h10M2 7.500h3V10" stroke="#444" /> },
  { label: "极轴", on: false, art: <><circle cx="6" cy="7" r="3.500" stroke="#333" /><path d="M6 7l5-5M6 7h5" stroke="#333" /></> },
  { label: "对象捕捉", on: true, art: <><rect x="3" y="3" width="9" height="9" fill="#fff" stroke="#777" /><rect x="1" y="1" width="3" height="3" stroke="#e8682a" /></> },
  { label: "三维对象捕捉", on: false, art: <><path d="M3 4l2-2h7v6l-2 3H3z" fill="#fff" stroke="#777" /><circle cx="3" cy="10.500" r="1.500" stroke="#e8682a" /></> },
  { label: "对象追踪", on: true, art: <path d="M10 2L2 10h9M7 6l2 4" stroke="#222" /> },
  { label: "动态UCS", on: true, art: <><path d="M2 1v10h10M2 11l6-6" stroke="#333" /><path d="M10 0v6M7 3h6" stroke="#f09a1c" strokeWidth="1.500" /></> },
  { label: "动态输入", on: true, art: <path d="M5 2v8M1 6h7M7 6.500h4v3H7z" stroke="#222" strokeWidth="1.200" /> },
  { label: "线宽", on: false, art: <><path d="M7 2v9" stroke="#222" strokeWidth="2" /><path d="M2 6.500h9" stroke="#222" /></> },
  { label: "透明度", on: true, art: <><rect x="1" y="1" width="11" height="11" fill="#b9dcf5" stroke="#2c7cc4" /><path d="M2 3.500h9M2 6h9M2 8.500h9" stroke="#2c7cc4" strokeDasharray="1 1" /></> },
  { label: "快捷特性", on: false, art: <path d="M4 2.500h5v8H4z" stroke="#333" strokeWidth="1.500" /> },
  { label: "选择循环", on: false, art: <><path d="M1 1l3 7 2-3 3-1z" fill="#eee" stroke="#444" /><rect x="6" y="6" width="6" height="6" fill="#5fae4a" stroke="#2f6b25" /></> },
  { label: "注释监视器", on: false, art: <path d="M5 1.500h3V5h3.500v3H8v3.500H5V8H1.500V5H5z" fill="#fff" stroke="#666" /> },
]

const StatusButton = ({ label, width = "w-[15px]", children }: Children & { label: string; width?: string }) => (
  <button aria-label={label} className={`flex h-full items-center justify-center gap-[2px] border-r border-[#777] bg-linear-to-b from-[#cfcfcf] to-[#a9a9a9] ${width}`}>
    {children}
  </button>
)

const StatusBar = () => (
  <footer className="flex h-4 shrink-0 items-center border-t border-[#4f4f4f] bg-linear-to-b from-[#9c9c9c] to-[#7b7b7b] text-[#161616]">
    <div className="flex w-[206px] shrink-0 gap-2 pl-[3px] font-['Liberation_Mono','Noto_Sans_CJK_SC',monospace] whitespace-nowrap">
      <span>燕秀字高=2.5</span>
      <span className="text-[7px] leading-3">2518.3225, 1844.3644, 0.0000</span>
    </div>
    <div className="grid h-full w-[230px] shrink-0 grid-cols-15 border-l border-[#777]">
      {statusToggles.map((t) => (
        <button
          key={t.label}
          aria-label={t.label}
          className={`flex items-center justify-center border-r border-[#777] bg-linear-to-b ${t.on ? "from-[#dff0f5] to-[#a6cfdb]" : "from-[#c9c9c9] to-[#a9a9a9]"}`}
        >
          <Glyph w={13} h={13}>
            {t.art}
          </Glyph>
        </button>
      ))}
    </div>
    <div className="flex h-full flex-1 items-center justify-end">
      <StatusButton label="模型" width="w-[23px]">
        <span className="font-medium text-black">模型</span>
      </StatusButton>
      <StatusButton label="快速查看布局">
        <Glyph color="#333">
          <rect x="1.500" y="1" width="9" height="8" fill="#eee" />
          <path d="M3 3l4 4H3M1 11h10" />
        </Glyph>
      </StatusButton>
      <StatusButton label="快速查看图形">
        <Glyph color="#333">
          <path d="M1 2h4v5H1zM7 2h4v5H7z" fill="#eee" />
          <path d="M1 10h10" strokeWidth="1.500" />
        </Glyph>
      </StatusButton>
      <span className="w-3" />
      <StatusButton label="注释比例" width="w-[38px]">
        <Glyph w={11}>
          <path d="M5.500 1L4 7l-3.500 4 5-2 5 2L7 7z" fill="#fff" strokeWidth=".9" />
        </Glyph>
        <span className="font-['Liberation_Mono',monospace]">1:1</span>
        <Caret className="text-black" />
      </StatusButton>
      <StatusButton label="注释可见性">
        <Glyph>
          <path d="M5 1L3.500 7 .5 11 5 9l4 2L6.500 7z" fill="#fff" strokeWidth=".9" />
          <circle cx="9" cy="7" r="2" fill="#ffc94a" stroke="#d88a18" />
        </Glyph>
      </StatusButton>
      <StatusButton label="自动缩放">
        <Glyph color="#888">
          <path d="M5 1L3.500 7 .5 11 5 9l4 2L6.500 7zM9.500 2v5" fill="#ccc" strokeWidth=".9" />
        </Glyph>
      </StatusButton>
      <span className="w-1" />
      <StatusButton label="切换工作空间">
        <Glyph color="#444">
          <circle cx="6" cy="6" r="5" strokeDasharray="2 1.100" strokeWidth="1.500" />
          <circle cx="6" cy="6" r="4" fill="#f5f5f5" strokeWidth=".8" />
          <circle cx="6" cy="6" r="1.500" fill="#bbb" strokeWidth=".8" />
        </Glyph>
      </StatusButton>
      <StatusButton label="锁定">
        <Glyph color="#444">
          <path d="M4 5V3c0-2.500 4-2.500 4 0v2" strokeWidth="1.300" />
          <rect x="2.500" y="5" width="7" height="6" fill="#eee" />
          <path d="M6 7v2" />
        </Glyph>
      </StatusButton>
      <StatusButton label="硬件加速">
        <Glyph color="#d0601f">
          <circle cx="6" cy="6" r="4.500" fill="#ee7428" />
          <path d="M3.500 4c2-2 3 0 5 1" stroke="#ffd9b8" />
        </Glyph>
      </StatusButton>
      <span className="w-1" />
      <StatusButton label="隔离对象" width="w-[19px]">
        <Glyph>
          <path d="M6 1C2.500 1 2.500 5 5 7v1.500h2V7c2.500-2 2.500-6-1-6z" fill="#fff1a0" stroke="#a08a45" />
          <path d="M5 10.500h2" strokeWidth="1.500" />
        </Glyph>
      </StatusButton>
      <button aria-label="状态栏菜单" className="flex w-[10px] justify-center">
        <Caret className="text-black" />
      </button>
      <StatusButton label="全屏显示">
        <Glyph color="#445">
          <rect x="1.500" y="1.500" width="9" height="9" fill="#fff" strokeWidth=".8" />
          <path d="M1.500 2.500h9" strokeWidth="2" />
        </Glyph>
      </StatusButton>
      <Glyph w={11} h={12} color="#ddd">
        <path d="M9 2.500h2M6 6h5M3 9.500h8" strokeDasharray="2 1" strokeWidth="2" />
      </Glyph>
    </div>
  </footer>
)

export default function App() {
  return (
    <div className="flex min-h-screen flex-col px-[6px] pb-[5px] font-['Noto_Sans','Noto_Sans_CJK_SC',sans-serif] text-[8px] leading-3 text-[#3a3a3a] [background:linear-gradient(180deg,#24577c,#5c7f98_20%,#7ea3bd_45%,#d9f1f6_58%,#a9cdee_72%,#dff5f6_88%,#cfe9f2)_0_0/5px_100%_no-repeat,linear-gradient(180deg,#2a5a7d,#2f6f9f_25%,#2d7fbf_50%,#5cb2e8_85%,#4fa3dc)_100%_0/5px_100%_no-repeat,linear-gradient(90deg,#d2ecf3,#8cc6ea_8%,#4fa2db_20%,#3f95d2)_0_100%/100%_4px_no-repeat,linear-gradient(180deg,#3d6f94_0,#1c4a70_4px,#1a466b_22px,#23333f_24px)]">
      <Header />
      <div className="flex bg-linear-to-b from-[#cfcfcf] to-[#8c8c8c]">
        <DrawPanel />
        <ModifyPanel />
        <LayerPanel />
        <AnnotatePanel />
        <BlockPanel />
        <PropertiesPanel />
        <GroupPanel />
        <UtilitiesPanel />
        <ClipboardPanel />
      </div>
      <DocumentTabs />
      <div className="h-[2px] bg-[#5a5a5a]" />
      <div className="flex flex-1 bg-[#686868]">
        <SideStrip />
        <div className="relative flex min-w-0 flex-1 flex-col border-r border-[#dde6ec]">
          <Canvas />
          <LayoutTabs />
          <Watermark />
        </div>
      </div>
      <StatusBar />
    </div>
  )
}
